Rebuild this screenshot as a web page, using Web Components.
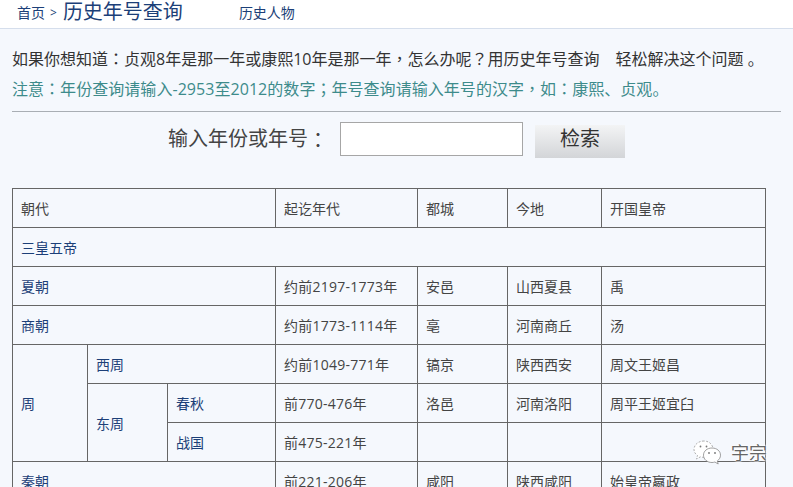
<!DOCTYPE html>
<html lang="zh-CN">
<head>
  <meta charset="UTF-8">
  <title>历史年号查询</title>
  <style>
    html, body { margin: 0; height: 487px; overflow: hidden; }
    body {
      position: relative;
      background: #f5f8fd;
      color: #333;
      font-family: "Open Sans", "Noto Sans CJK SC", "Liberation Sans", sans-serif;
    }
  </style>
</head>
<body>
  <top-bar crumb="首页" title-text="历史年号查询" link="历史人物"></top-bar>
  <main-panel>
    <p-line>如果你想知道<c-p>：</c-p>贞观8年是那一年或康熙10年是那一年<c-p>，</c-p>怎么办呢<c-p>？</c-p>用历史年号查询&emsp;轻松解决这个问题 。</p-line>
    <p-line kind="note">注意<c-p>：</c-p>年份查询请输入-2953至2012的数字<c-p>；</c-p>年号查询请输入年号的汉字<c-p>，</c-p>如<c-p>：</c-p>康熙、贞观。</p-line>
    <search-box></search-box>
    <dynasty-table></dynasty-table>
  </main-panel>
  <wm-mark>宇宗</wm-mark>

  <script>
    class TopBar extends HTMLElement {
      constructor() {
        super()
        const shadow = this.attachShadow({mode: 'open'})
        shadow.innerHTML = `
          <style>
            :host {
              display: flex;
              box-sizing: border-box;
              height: 29px;
              padding: 0 0 0 17px;
              background: #fff;
              border-bottom: 1px solid #d5deec;
              color: #1c3f78;
              align-items: flex-start;
              font-size: 14px;
              line-height: 26px;
            }
            .sep { margin: 0 6px 0 5px; font-size: 12px; }
            .now { font-size: 20px; line-height: 23px; margin-right: 56px; }
          </style>
          <span>${this.getAttribute('crumb')}</span>
          <span class="sep">&gt;</span>
          <span class="now">${this.getAttribute('title-text')}</span>
          <span>${this.getAttribute('link')}</span>
        `
      }
    }

    class MainPanel extends HTMLElement {
      constructor() {
        super()
        const shadow = this.attachShadow({mode: 'open'})
        shadow.innerHTML = `
          <style>
            :host { display: block; padding: 15px 12px 0; }
          </style>
          <slot></slot>
        `
      }
    }

    class PLine extends HTMLElement {
      constructor() {
        super()
        const shadow = this.attachShadow({mode: 'open'})
        shadow.innerHTML = `
          <style>
            :host {
              display: block;
              height: 30px;
              font-size: 16px;
              line-height: 30px;
              white-space: nowrap;
              color: #333;
            }
            :host([kind="note"]) { color: #3d8b8b; letter-spacing: .05px; }
          </style>
          <slot></slot>
        `
      }
    }

    // 标点居中，繁体字形的全角标点和原图一样
    class CP extends HTMLElement {
      constructor() {
        super()
        const shadow = this.attachShadow({mode: 'open'})
        shadow.innerHTML = `
          <style>
            :host {
              display: inline-block;
              width: 1em;
              line-height: 1;
              white-space: nowrap;
              font-family: "Noto Sans CJK TC", sans-serif;
            }
          </style>
          <slot></slot>
        `
      }
    }

    class SearchBox extends HTMLElement {
      constructor() {
        super()
        const shadow = this.attachShadow({mode: 'open'})
        shadow.innerHTML = `
          <style>
            :host {
              display: flex;
              align-items: flex-start;
              box-sizing: border-box;
              height: 77px;
              margin-top: 7px;
              padding: 10px 0 0 156px;
              border-top: 1px solid #a9aeb4;
              font-size: 20px;
              color: #444;
            }
            label { width: 172px; line-height: 34px; white-space: nowrap; }
            label c-p { vertical-align: -2px; }
            input {
              box-sizing: border-box;
              width: 183px;
              height: 34px;
              margin: 0;
              padding: 0 6px;
              border: 1px solid #a6a6a6;
              background: #fff;
            }
            button {
              box-sizing: border-box;
              width: 90px;
              height: 33px;
              margin: 3px 0 0 12px;
              padding: 0 0 5px;
              border: 0;
              color: #333;
              background: linear-gradient(#f3f4f5, #d3d5d8);
              font: inherit;
              line-height: 28px;
            }
          </style>
          <label>输入年份或年号<c-p>：</c-p></label>
          <input type="text">
          <button>检索</button>
        `
      }
    }

    // 一行一个数组，[文字, colspan, rowspan, 样式]
    const rows = [
      [['朝代', 3], ['起讫年代'], ['都城'], ['今地'], ['开国皇帝']],
      [['三皇五帝', 7, 1, 'link']],
      [['夏朝', 3, 1, 'link'], ['约前2197-1773年', 1, 1, 'date'], ['安邑'], ['山西夏县'], ['禹']],
      [['商朝', 3, 1, 'link'], ['约前1773-1114年', 1, 1, 'date'], ['亳'], ['河南商丘'], ['汤']],
      [['周', 1, 3, 'link'], ['西周', 2, 1, 'link'], ['约前1049-771年', 1, 1, 'date'], ['镐京'], ['陕西西安'], ['周文王姬昌']],
      [['东周', 1, 2, 'link'], ['春秋', 1, 1, 'link'], ['前770-476年', 1, 1, 'date'], ['洛邑'], ['河南洛阳'], ['周平王姬宜臼']],
      [['战国', 1, 1, 'link'], ['前475-221年', 1, 1, 'date'], [''], [''], ['']],
      [['秦朝', 3, 1, 'link'], ['前221-206年', 1, 1, 'date'], ['咸阳'], ['陕西咸阳'], ['始皇帝嬴政']]
    ]

    class DynastyTable extends HTMLElement {
      constructor() {
        super()
        const shadow = this.attachShadow({mode: 'open'})
        const body = rows.map(r => '<tr>' + r.map(([text, cs = 1, rs = 1, cls = '']) =>
          `<td colspan="${cs}" rowspan="${rs}" class="${cls}">${text}</td>`
        ).join('') + '</tr>').join('')
        shadow.innerHTML = `
          <style>
            :host { display: block; font-size: 14px; }
            table {
              border-collapse: collapse;
              table-layout: fixed;
              width: 753px;
            }
            td {
              box-sizing: border-box;
              height: 39px;
              padding: 0 8px;
              border: 1px solid #666;
              color: #444;
              white-space: nowrap;
            }
            td.link { color: #1c3f78; }
            td.date { letter-spacing: .25px; }
          </style>
          <table>
            <colgroup>
              <col style="width:75px"><col style="width:80px"><col style="width:108px">
              <col style="width:142px"><col style="width:90px"><col style="width:94px"><col style="width:164px">
            </colgroup>
            <tbody>${body}</tbody>
          </table>
        `
      }
    }

    class WmMark extends HTMLElement {
      constructor() {
        super()
        const shadow = this.attachShadow({mode: 'open'})
        shadow.innerHTML = `
          <style>
            :host {
              position: absolute;
              left: 692px;
              top: 439px;
              display: flex;
              align-items: center;
              gap: 8px;
              font-size: 18px;
              line-height: 26px;
              color: #666;
              text-shadow: 0 0 2px #fff, 0 0 2px #fff, 0 0 3px #fff;
            }
            svg { display: block; }
          </style>
          <svg width="31" height="27" viewBox="0 0 31 27">
            <path d="M12 2C6 2 2 6 2 10.500c0 2.500 1.300 4.500 3.500 6L4.500 20l4-2.200c1 .3 2 .5 3 .5 5.500 0 9.500-3.800 9.500-8S17.500 2 12 2z" fill="#fff" stroke="#999" stroke-width=".8" stroke-dasharray="2 1.500"/>
            <path d="M20 9c-5 0-8.500 3.200-8.500 7.200s3.500 7.300 8.500 7.300c1 0 2-.2 2.900-.5l3.300 2-.9-3.100c2-1.400 3.200-3.400 3.200-5.700C28.500 12.200 25 9 20 9z" fill="#fff" stroke="#888" stroke-width=".8"/>
            <circle cx="8.500" cy="7.500" r=".9" fill="#777"/><circle cx="14.500" cy="7.500" r=".9" fill="#777"/>
            <circle cx="17" cy="14" r=".9" fill="#777"/><circle cx="23" cy="14" r=".9" fill="#777"/>
          </svg>
          <slot></slot>
        `
      }
    }

    customElements.define('top-bar', TopBar)
    customElements.define('main-panel', MainPanel)
    customElements.define('p-line', PLine)
    customElements.define('c-p', CP)
    customElements.define('search-box', SearchBox)
    customElements.define('dynasty-table', DynastyTable)
    customElements.define('wm-mark', WmMark)
  </script>
</body>
</html>
